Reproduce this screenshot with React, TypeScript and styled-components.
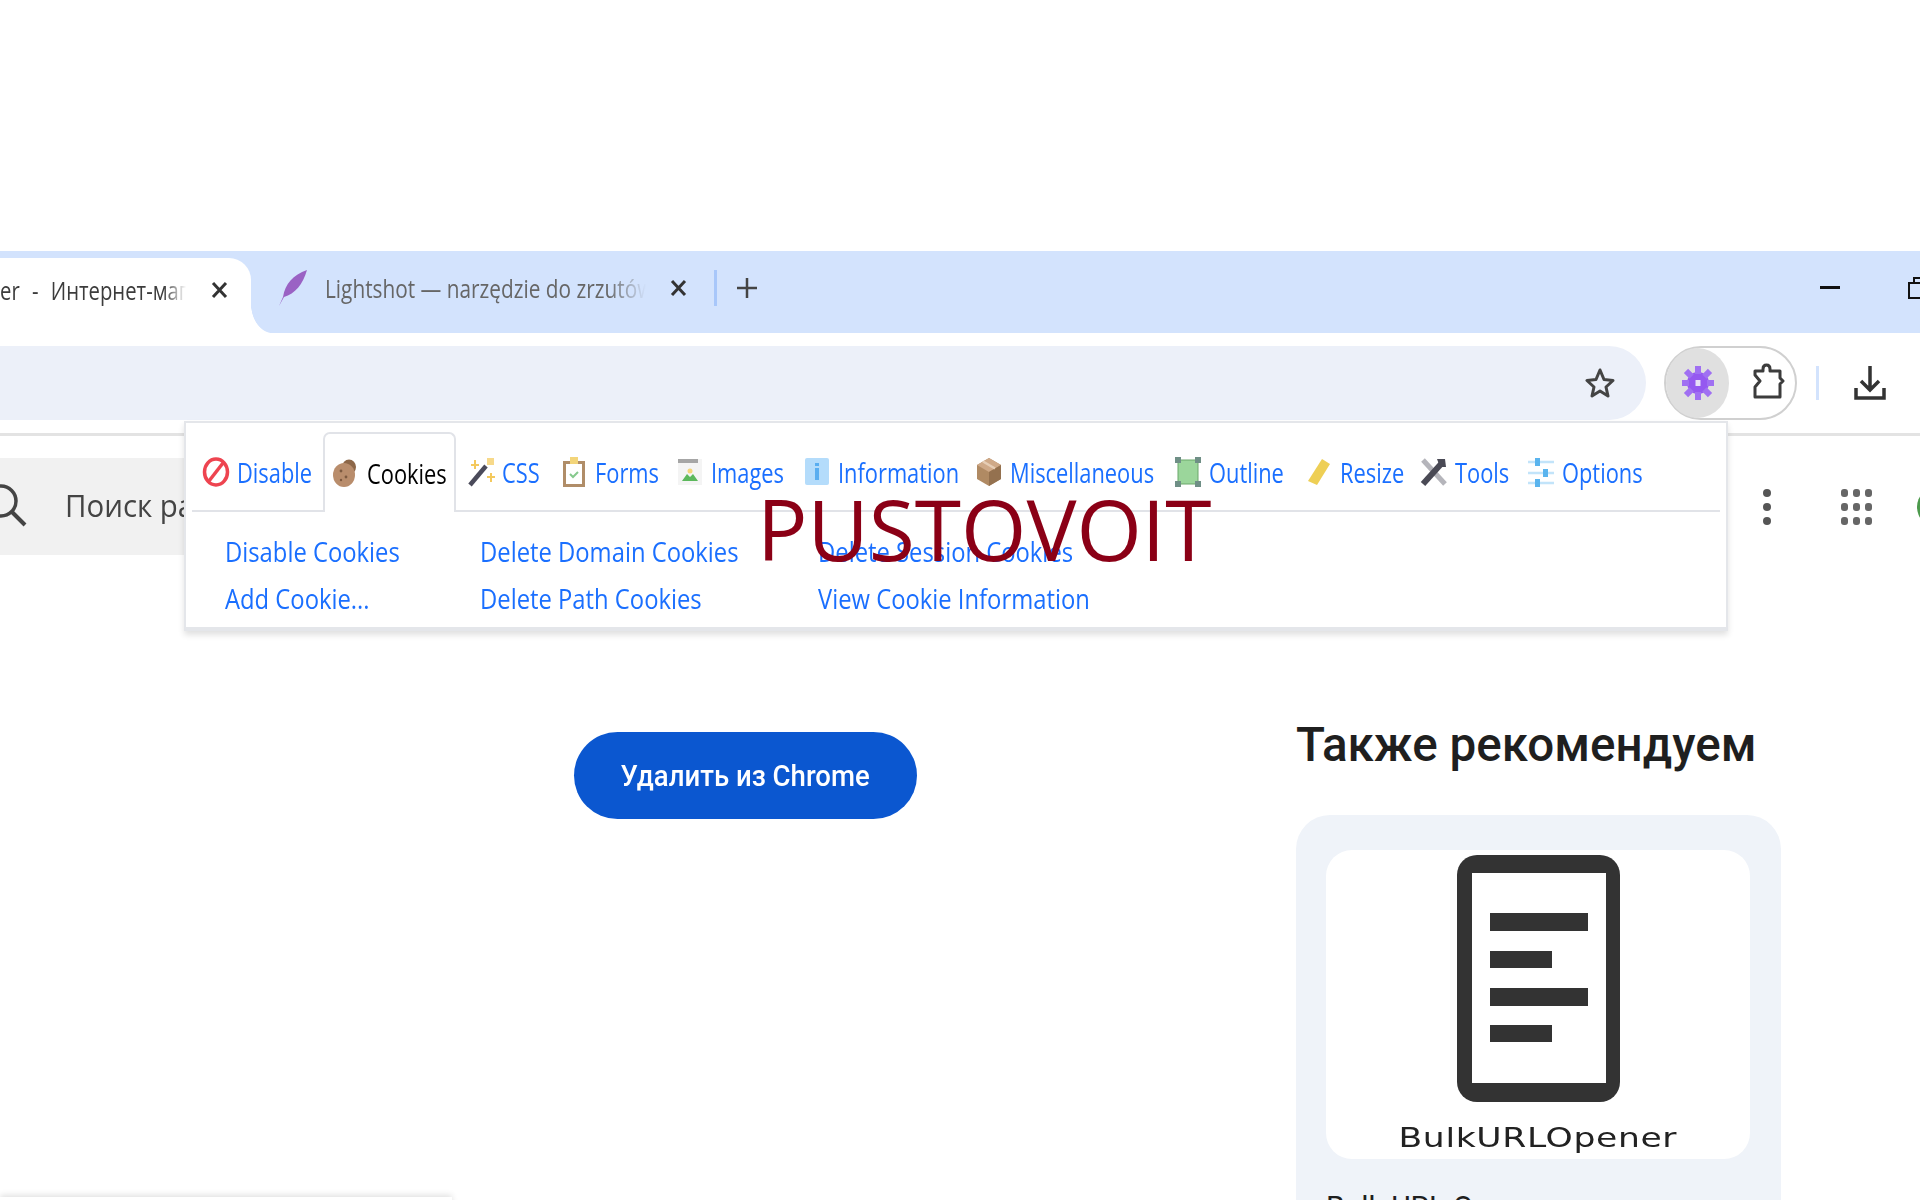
import React from 'react';
import styled, { createGlobalStyle } from 'styled-components';

const GlobalStyle = createGlobalStyle`
  html, body {
    margin: 0;
    padding: 0;
    background: #fff;
    overflow: hidden;
  }
`;

const uiFont = `"Open Sans", "Noto Sans", sans-serif`;

const Page = styled.div`
  position: relative;
  width: 1920px;
  height: 1200px;
  overflow: hidden;
  background: #fff;
  font-family: ${uiFont};
`;

const TopGap = styled.div`
  height: 251px;
`;

const TabStrip = styled.div`
  display: flex;
  height: 82px;
  background: #d3e3fd;
  overflow: hidden;
`;

const ActiveTab = styled.div`
  position: relative;
  display: flex;
  align-items: center;
  width: 251px;
  height: 75px;
  margin-top: 7px;
  background: #fff;
  border-top-right-radius: 22px;
  padding-bottom: 11px;
  box-sizing: border-box;
  &::after {
    content: '';
    position: absolute;
    left: 251px;
    bottom: 0;
    width: 22px;
    height: 30px;
    background: radial-gradient(ellipse at 100% 0, transparent 70%, #fff 72%);
  }
`;

const TabTitle = styled.div<{ $w: number; $color: string; $left?: number; $words?: number }>`
  width: ${(p) => p.$w}px;
  margin-left: ${(p) => p.$left ?? 0}px;
  overflow: hidden;
  white-space: nowrap;
  color: ${(p) => p.$color};
  font-size: 26px;
  line-height: 36px;
  word-spacing: ${(p) => p.$words ?? 0}px;
  mask-image: linear-gradient(to right, #000 88%, transparent 100%);
`;

const Squeeze = styled.span<{ $sx: number }>`
  display: inline-block;
  white-space: nowrap;
  transform: scaleX(${(p) => p.$sx});
  transform-origin: left center;
`;

const CloseMark = styled.svg<{ $left: number }>`
  flex: none;
  width: 17px;
  height: 18px;
  margin-left: ${(p) => p.$left}px;
`;

const IdleTab = styled.div`
  display: flex;
  align-items: center;
  height: 73px;
  padding-left: 27px;
`;

const TabDivider = styled.div`
  width: 3px;
  height: 36px;
  margin-left: 27px;
  background: #a8c7fa;
`;

const PlusMark = styled.svg`
  width: 20px;
  height: 20px;
  margin-left: 20px;
`;

const WindowControls = styled.div`
  display: flex;
  align-items: center;
  gap: 68px;
  margin-left: auto;
  height: 73px;
  width: 100px;
  & > svg {
    flex: none;
  }
`;

const Toolbar = styled.div`
  display: flex;
  align-items: flex-start;
  height: 103px;
  padding-top: 13px;
  box-sizing: border-box;
  border-bottom: 3px solid #e3e3e3;
`;

const AddressBar = styled.div`
  display: flex;
  align-items: center;
  justify-content: flex-end;
  width: 1646px;
  height: 74px;
  padding-right: 31px;
  box-sizing: border-box;
  background: #ecf0f9;
  border-radius: 0 37px 37px 0 / 0 37px 37px 0;
`;

const ExtensionPill = styled.div`
  display: flex;
  align-items: center;
  width: 133px;
  height: 74px;
  margin-left: 18px;
  border: 2px solid #d0d0d0;
  box-sizing: border-box;
  border-radius: 37px;
`;

const ExtensionActive = styled.div`
  display: flex;
  align-items: center;
  justify-content: center;
  width: 63px;
  height: 100%;
  background: #e0e0e0;
  border-radius: 50%;
`;

const PuzzleIcon = styled.svg`
  width: 32px;
  height: 36px;
  margin: -5px 0 0 24px;
`;

const ToolbarRule = styled.div`
  width: 3px;
  height: 34px;
  margin: 20px 0 0 19px;
  background: #d3e3fd;
`;

const DownloadWrap = styled.div`
  margin: 20px 0 0 35px;
`;

const SearchRow = styled.div`
  display: flex;
  align-items: center;
  justify-content: space-between;
  margin-top: 22px;
`;

const SearchBox = styled.div`
  display: flex;
  align-items: center;
  width: 320px;
  height: 97px;
  padding-bottom: 3px;
  box-sizing: border-box;
  background: #f1f1f1;
  color: #444;
  font-size: 31px;
  overflow: hidden;
`;

const SearchIcon = styled.svg`
  flex: none;
  width: 44px;
  height: 44px;
  margin-left: -17px;
  margin-right: 38px;
`;

const AppIcons = styled.div`
  display: flex;
  align-items: center;
  height: 97px;
`;

const KebabIcon = styled.svg`
  width: 8px;
  height: 36px;
`;

const GridIcon = styled.svg`
  width: 32px;
  height: 36px;
  margin-left: 70px;
`;

const Avatar = styled.div`
  width: 40px;
  height: 40px;
  margin-left: 44px;
  margin-right: -37px;
  border-radius: 50%;
  background: #4c9a4c;
`;

const Main = styled.div`
  display: grid;
  grid-template-columns: 1296px 485px;
`;

const LeftColumn = styled.div`
  padding-top: 177px;
`;

const RemoveButton = styled.button`
  display: flex;
  align-items: center;
  justify-content: center;
  width: 343px;
  height: 87px;
  margin-left: 574px;
  padding: 0;
  border: 0;
  border-radius: 44px;
  background: #0b57d0;
  color: #fff;
  font-family: Roboto, sans-serif;
  font-weight: 500;
  font-size: 29px;
`;

const ButtonLabel = styled.span`
  display: inline-block;
  white-space: nowrap;
  transform: scaleX(0.95);
`;

const GhostCard = styled.div`
  width: 452px;
  height: 40px;
  margin-top: 378px;
  background: #fff;
  box-shadow: 0 -2px 6px rgba(0, 0, 0, 0.12);
`;

const RightColumn = styled.div`
  padding-top: 161px;
`;

const Heading = styled.h2`
  margin: 0 0 41px;
  height: 58px;
  color: #1f1f1f;
  font-family: Roboto, sans-serif;
  font-weight: 500;
  font-size: 47.6px;
  line-height: 58px;
  white-space: nowrap;
`;

const RecommendCard = styled.div`
  height: 500px;
  padding: 35px 31px 0 30px;
  box-sizing: border-box;
  background: #eff3f9;
  border-radius: 34px;
`;

const Thumb = styled.div`
  display: flex;
  flex-direction: column;
  align-items: center;
  height: 309px;
  padding-top: 5px;
  box-sizing: border-box;
  background: #fff;
  border-radius: 26px;
`;

const DocIcon = styled.svg`
  width: 163px;
  height: 247px;
`;

const ThumbName = styled.div`
  margin-top: 20px;
  color: #222;
  font-family: "DejaVu Sans", sans-serif;
  font-size: 27px;
  line-height: 32px;
  letter-spacing: 0.5px;
  white-space: nowrap;
  transform: scaleX(1.28);
`;

const CardTitle = styled.div`
  margin-top: 30px;
  color: #1f1f1f;
  font-family: Roboto, sans-serif;
  font-size: 30px;
  white-space: nowrap;
`;

const Popup = styled.div`
  position: absolute;
  left: 184px;
  top: 421px;
  width: 1544px;
  height: 210px;
  padding: 9px 6px 0;
  box-sizing: border-box;
  background: #fff;
  border: 2px solid #e4e6ea;
  border-bottom-width: 4px;
  box-shadow: 0 4px 6px rgba(0, 0, 0, 0.12);
`;

const TabBar = styled.div`
  display: flex;
  height: 78px;
  border-bottom: 2px solid #e1e3e8;
`;

const Tab = styled.div<{ $w: number; $pad: number; $active?: boolean }>`
  display: flex;
  align-items: center;
  flex: none;
  width: ${(p) => p.$w}px;
  height: ${(p) => (p.$active ? 80 : 78)}px;
  padding-left: ${(p) => p.$pad}px;
  padding-top: ${(p) => (p.$active ? 0 : 2)}px;
  box-sizing: border-box;
  background: #fff;
  color: ${(p) => (p.$active ? '#000' : '#1a6fff')};
  font-size: 28px;
  ${(p) =>
    p.$active &&
    `
    border: 2px solid #e1e3e8;
    border-bottom: 0;
    border-radius: 7px 7px 0 0;
  `}
`;

const TabIcon = styled.svg`
  flex: none;
  width: 28px;
  height: 30px;
  margin-right: 7px;
`;

const LinkGrid = styled.div`
  display: grid;
  grid-template-columns: 255px 338px 1fr;
  grid-auto-rows: 46.5px;
  padding: 16px 0 0 33px;
  color: #1a6fff;
  font-size: 28px;
  line-height: 46px;
`;

const Watermark = styled.div`
  position: absolute;
  left: 757px;
  top: 473px;
  color: #8b0016;
  font-family: "Open Sans", sans-serif;
  font-size: 84px;
  line-height: 112px;
  white-space: nowrap;
`;

const IconDisable = () => (
  <TabIcon viewBox="0 0 28 30">
    <ellipse cx="14" cy="15" rx="11.5" ry="13" fill="none" stroke="#ee4450" strokeWidth="3.5" />
    <path d="M7 24 L21 6" stroke="#ee4450" strokeWidth="3.5" />
  </TabIcon>
);

const IconCookie = () => (
  <TabIcon viewBox="0 0 28 30">
    <ellipse cx="17" cy="9" rx="7" ry="7.5" fill="#8d6748" />
    <ellipse cx="12" cy="17" rx="11" ry="12" fill="#b98d6c" />
    <circle cx="9" cy="13" r="1.4" fill="#7d5a40" />
    <circle cx="14" cy="19" r="1.4" fill="#7d5a40" />
    <circle cx="9" cy="22" r="1.2" fill="#7d5a40" />
  </TabIcon>
);

const IconWand = () => (
  <TabIcon viewBox="0 0 28 30">
    <path d="M3 28 L19 9" stroke="#4a4a5a" strokeWidth="4.5" />
    <path d="M4 8h8M8 3v9M20 20h8M24 16v9" stroke="#f4c95d" strokeWidth="2" />
    <rect x="20" y="1" width="7" height="7" fill="#f7d98a" />
  </TabIcon>
);

const IconClipboard = () => (
  <TabIcon viewBox="0 0 28 30">
    <rect x="3" y="4" width="22" height="26" fill="#b08d68" />
    <rect x="6" y="7" width="16" height="20" fill="#fff" />
    <rect x="10" y="0" width="8" height="7" fill="#f3d57a" />
    <path d="M10 17l3 3 5-5" fill="none" stroke="#86c98d" strokeWidth="2" />
  </TabIcon>
);

const IconImage = () => (
  <TabIcon viewBox="0 0 28 30">
    <rect x="2" y="2" width="24" height="26" fill="#f4f4f4" />
    <rect x="2" y="2" width="20" height="4" fill="#a6a6a6" />
    <circle cx="14" cy="14" r="2.5" fill="#f3d57a" />
    <path d="M6 24l5-7 3 3 3-3 5 7z" fill="#5cb85c" />
  </TabIcon>
);

const IconInfo = () => (
  <TabIcon viewBox="0 0 28 30">
    <rect x="2" y="1" width="24" height="27" rx="2" fill="#b4dcfb" />
    <rect x="12" y="6" width="4" height="3" fill="#5aaef0" />
    <rect x="12" y="11" width="4" height="12" fill="#5aaef0" />
  </TabIcon>
);

const IconBox = () => (
  <TabIcon viewBox="0 0 28 30">
    <path d="M14 1 L26 8 V22 L14 29 L2 22 V8z" fill="#b08a63" />
    <path d="M14 1 L26 8 L14 15 L2 8z" fill="#cfa988" />
    <path d="M14 15 V29 L26 22 V8z" fill="#94714f" />
    <path d="M8 4.5 L20 11.5" stroke="#e6cdb5" strokeWidth="2.5" />
  </TabIcon>
);

const IconOutline = () => (
  <TabIcon viewBox="0 0 28 30">
    <rect x="4" y="3" width="20" height="24" fill="#9bd69b" stroke="#6aa76a" />
    <rect x="1" y="0" width="6" height="6" fill="#6f8f86" />
    <rect x="21" y="0" width="6" height="6" fill="#6f8f86" />
    <rect x="1" y="24" width="6" height="6" fill="#6f8f86" />
    <rect x="21" y="24" width="6" height="6" fill="#6f8f86" />
  </TabIcon>
);

const IconResize = () => (
  <TabIcon viewBox="0 0 28 30">
    <path d="M17 2 L25 7 L12 28 L3 24z" fill="#eecf55" />
  </TabIcon>
);

const IconTools = () => (
  <TabIcon viewBox="0 0 28 30">
    <path d="M3 3 L25 27" stroke="#b5b5bb" strokeWidth="5" />
    <path d="M3 27 L21 7" stroke="#4a4a55" strokeWidth="6" />
    <path d="M17 2 L25 2 L26 10 L20 10z" fill="#4a4a55" />
  </TabIcon>
);

const IconOptions = () => (
  <TabIcon viewBox="0 0 28 30">
    <path d="M1 5h26M1 16h26M1 26h26" stroke="#c2e4fa" strokeWidth="2.5" />
    <rect x="8" y="1" width="5" height="8" fill="#5ab4ee" />
    <rect x="16" y="12" width="5" height="8" fill="#5ab4ee" />
    <rect x="8" y="22" width="5" height="8" fill="#5ab4ee" />
  </TabIcon>
);

const tabs = [
  { label: 'Disable', w: 131, pad: 10, Icon: IconDisable },
  { label: 'Cookies', w: 133, pad: 7, Icon: IconCookie, active: true },
  { label: 'CSS', w: 104, pad: 11, Icon: IconWand },
  { label: 'Forms', w: 116, pad: 0, Icon: IconClipboard },
  { label: 'Images', w: 127, pad: 0, Icon: IconImage },
  { label: 'Information', w: 172, pad: 0, Icon: IconInfo },
  { label: 'Miscellaneous', w: 199, pad: 0, Icon: IconBox },
  { label: 'Outline', w: 131, pad: 0, Icon: IconOutline },
  { label: 'Resize', w: 115, pad: 0, Icon: IconResize },
  { label: 'Tools', w: 107, pad: 0, Icon: IconTools },
  { label: 'Options', w: 120, pad: 0, Icon: IconOptions },
];

const links = [
  'Disable Cookies',
  'Delete Domain Cookies',
  'Delete Session Cookies',
  'Add Cookie...',
  'Delete Path Cookies',
  'View Cookie Information',
];

const Close = ({ left }: { left: number }) => (
  <CloseMark $left={left} viewBox="0 0 17 18">
    <path d="M2 2 L15 16 M15 2 L2 16" stroke="#333" strokeWidth="3" />
  </CloseMark>
);

export default function App() {
  return (
    <Page>
      <GlobalStyle />
      <TopGap />
      <TabStrip>
        <ActiveTab>
          <TabTitle $w={186} $color="#3c3c3c" $words={9}>
            <Squeeze $sx={0.78}>er - Интернет-магазин Chrome</Squeeze>
          </TabTitle>
          <Close left={25} />
        </ActiveTab>
        <IdleTab>
          <svg width="29" height="36" viewBox="0 0 29 36">
            <path d="M29 0 C15 5 7 14 5 27 L1 36 L6 27 C17 24 25 14 29 0z" fill="#9a62c4" />
          </svg>
          <TabTitle $w={321} $color="#666" $left={18}>
            <Squeeze $sx={0.8}>Lightshot — narzędzie do zrzutów ekranu</Squeeze>
          </TabTitle>
          <Close left={24} />
          <TabDivider />
          <PlusMark viewBox="0 0 20 20">
            <path d="M10 0v20M0 10h20" stroke="#444" strokeWidth="2.5" />
          </PlusMark>
        </IdleTab>
        <WindowControls>
          <svg width="20" height="4" viewBox="0 0 20 4">
            <rect width="20" height="3" fill="#111" />
          </svg>
          <svg width="20" height="22" viewBox="0 0 20 22">
            <path d="M20 6H1v15h19M6 5V1h14" fill="none" stroke="#111" strokeWidth="2" />
          </svg>
        </WindowControls>
      </TabStrip>
      <Toolbar>
        <AddressBar>
          <svg width="30" height="32" viewBox="0 0 30 32">
            <path
              d="M15 3 L19 12.5 L28 13.5 L21 20 L23 29 L15 24 L7 29 L9 20 L2 13.5 L11 12.5z"
              fill="none"
              stroke="#444"
              strokeWidth="3"
              strokeLinejoin="round"
            />
          </svg>
        </AddressBar>
        <ExtensionPill>
          <ExtensionActive>
            <svg width="32" height="34" viewBox="0 0 32 34">
              <circle cx="16" cy="17" r="11" fill="#9559f0" />
              {[0, 45, 90, 135, 180, 225, 270, 315].map((deg) => (
                <rect key={deg} x="13" y="0" width="6" height="8" fill="#a070f2" transform={`rotate(${deg} 16 17)`} />
              ))}
              <rect x="13.5" y="14" width="5" height="6" fill="#e8e0f6" />
            </svg>
          </ExtensionActive>
          <PuzzleIcon viewBox="0 0 32 36">
            <path
              d="M2 8 H10 V6 Q10 2 13.5 2 Q17 2 17 6 V8 H27 V15 L30 18 L27 21 V34 H2 V24 L7 18 L2 12 Z"
              fill="none"
              stroke="#3c3c3c"
              strokeWidth="3"
              strokeLinejoin="round"
            />
          </PuzzleIcon>
        </ExtensionPill>
        <ToolbarRule />
        <DownloadWrap>
          <svg width="32" height="34" viewBox="0 0 32 34">
            <path d="M16 0v24M7 15l9 9 9-9M2 22v10h28V22" fill="none" stroke="#333" strokeWidth="3.5" />
          </svg>
        </DownloadWrap>
      </Toolbar>
      <SearchRow>
        <SearchBox>
          <SearchIcon viewBox="0 0 44 44">
            <circle cx="18" cy="18" r="15" fill="none" stroke="#444" strokeWidth="3.5" />
            <path d="M29 29 L42 42" stroke="#444" strokeWidth="4" />
          </SearchIcon>
          <Squeeze $sx={0.95}>Поиск расширений</Squeeze>
        </SearchBox>
        <AppIcons>
          <KebabIcon viewBox="0 0 8 36">
            <rect y="0" width="8" height="8" rx="4" fill="#555" />
            <rect y="14" width="8" height="8" rx="4" fill="#555" />
            <rect y="28" width="8" height="8" rx="4" fill="#555" />
          </KebabIcon>
          <GridIcon viewBox="0 0 32 36">
            {[0, 12, 24].map((x) =>
              [0, 14, 28].map((y) => <rect key={`${x}-${y}`} x={x} y={y} width="7" height="8" rx="3" fill="#666" />),
            )}
          </GridIcon>
          <Avatar />
        </AppIcons>
      </SearchRow>
      <Main>
        <LeftColumn>
          <RemoveButton>
            <ButtonLabel>Удалить из Chrome</ButtonLabel>
          </RemoveButton>
          <GhostCard />
        </LeftColumn>
        <RightColumn>
          <Heading>Также рекомендуем</Heading>
          <RecommendCard>
            <Thumb>
              <DocIcon viewBox="0 0 163 247">
                <rect width="163" height="247" rx="20" fill="#333" />
                <rect x="15" y="18" width="134" height="210" fill="#fff" />
                <rect x="33" y="58" width="98" height="18" fill="#333" />
                <rect x="33" y="96" width="62" height="17" fill="#333" />
                <rect x="33" y="133" width="98" height="18" fill="#333" />
                <rect x="33" y="170" width="62" height="17" fill="#333" />
              </DocIcon>
              <ThumbName>BulkURLOpener</ThumbName>
            </Thumb>
            <CardTitle>Bulk URL Opener</CardTitle>
          </RecommendCard>
        </RightColumn>
      </Main>
      <Popup>
        <TabBar>
          {tabs.map(({ label, w, pad, Icon, active }) => (
            <Tab key={label} $w={w} $pad={pad} $active={active}>
              <Icon />
              <Squeeze $sx={0.78}>{label}</Squeeze>
            </Tab>
          ))}
        </TabBar>
        <LinkGrid>
          {links.map((link) => (
            <div key={link}>
              <Squeeze $sx={0.85}>{link}</Squeeze>
            </div>
          ))}
        </LinkGrid>
      </Popup>
      <Watermark>PUSTOVOIT</Watermark>
    </Page>
  );
}
